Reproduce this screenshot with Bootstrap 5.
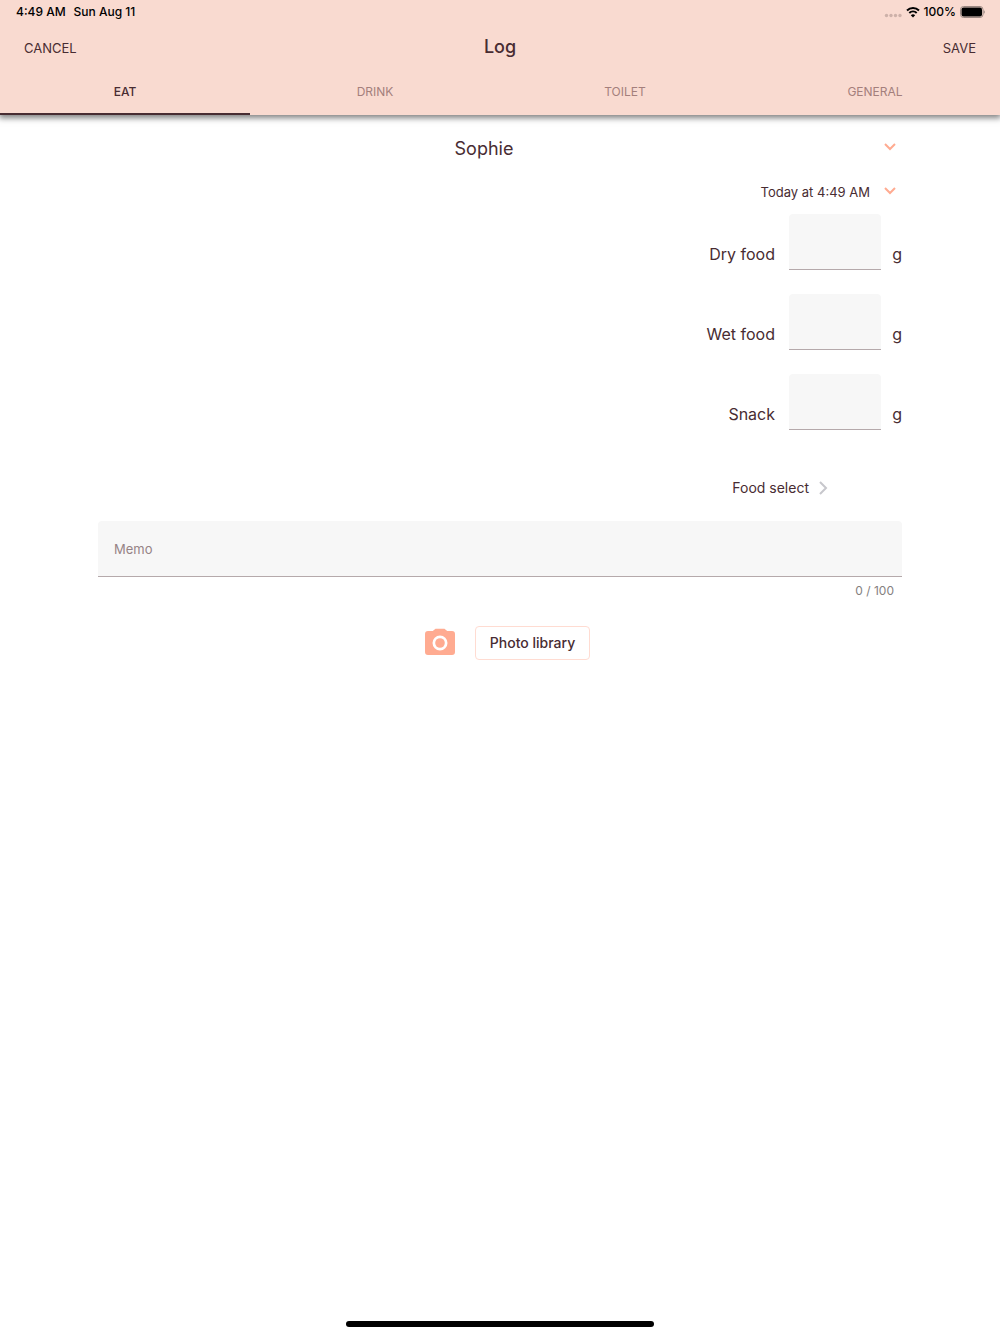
<!DOCTYPE html>
<html lang="en">
<head>
<meta charset="utf-8">
<meta name="viewport" content="width=device-width, initial-scale=1">
<title>Log</title>
<link href="https://cdn.jsdelivr.net/npm/bootstrap@5.3.0/dist/css/bootstrap.min.css" rel="stylesheet">
<style>
  :root { --ink: #482c32; --blush: #f9dad0; --peach: #ffab91; --field: #f7f7f7; }
  body { font-family: Inter, "Liberation Sans", sans-serif; color: var(--ink); background: #fff; }
  button, .btn { color: var(--ink); }
  .app-header { background: var(--blush); box-shadow: 0 2px 6px 1px rgba(0,0,0,.5); }
  .status-bar { height: 24px; font-size: 12px; line-height: 24px; font-weight: 500; color: #000; padding: 0 15px 0 16px; }
  .title-bar { height: 47px; }
  .title-bar h1 { font-size: 18px; line-height: 24px; font-weight: 500; padding-top: 11px; }
  .bar-action { font-size: 13px; line-height: 20px; padding: 14px 24px; border: 0; border-radius: 0; }
  .app-tabs .nav-link { height: 44px; padding: 0; font-size: 12px; line-height: 42px; color: #a47f7c; background: none; border: 0; border-bottom: 2px solid transparent; border-radius: 0; width: 100%; }
  .app-tabs .nav-link.active { color: var(--ink); font-weight: 500; border-bottom-color: var(--ink); }
  .log-form { padding: 20px 98px; }
  .row-action { border: 0; background: none; padding: 0; }
  .row-action svg { width: 24px; height: 24px; }
  .pet-row { height: 28px; font-size: 18px; line-height: 28px; }
  .time-row { height: 27px; font-size: 13px; line-height: 27px; }
  .entry { height: 56px; font-size: 16px; line-height: 24px; padding-bottom: 4px; }
  .entry-label { margin-right: 14px; }
  .entry-unit { width: 21px; }
  .filled { background: var(--field); border: 0; border-bottom: 1px solid #b5a9ab; border-radius: 4px 4px 0 0; height: 56px; font-size: 13px; color: var(--ink); }
  .filled::placeholder { color: #968386; opacity: 1; }
  .filled:focus { background: var(--field); }
  .entry .filled { width: 92px; margin-bottom: -4px; }
  .food-row { margin: 44px 65px 0 0; font-size: 14px; line-height: 28px; }
  .memo { margin-top: 19px; padding: 0 16px; }
  .counter { font-size: 12px; line-height: 28px; color: #858080; padding-right: 8px; }
  .photo-row { margin-top: 20px; }
  .camera-btn { width: 61px; border: 0; background: none; padding: 0; }
  .library-btn, .library-btn:hover { border: 1px solid #ffdcd2; border-radius: 4px; background: #fff; font-size: 14px; font-weight: 500; line-height: 20px; padding: 6px 14px; }
  .home-bar { width: 308px; height: 6px; border-radius: 3px; background: #000; margin-bottom: 7px; }
</style>
<script src="https://cdn.jsdelivr.net/npm/bootstrap@5.3.0/dist/js/bootstrap.bundle.min.js"></script>
</head>
<body class="d-flex flex-column min-vh-100">
<header class="app-header">
  <div class="status-bar d-flex justify-content-between">
    <div class="d-flex gap-2"><span>4:49 AM</span><span>Sun Aug 11</span></div>
    <div class="d-flex align-items-center">
      <svg class="me-1" width="18" height="14" viewBox="0 0 18 14" fill="#cdb1a9" aria-hidden="true"><circle cx="2.500" cy="10.500" r="1.700"/><circle cx="7" cy="10.500" r="1.700"/><circle cx="11.500" cy="10.500" r="1.700"/><circle cx="16" cy="10.500" r="1.700"/></svg>
      <svg class="me-1" width="14" height="12" viewBox="0 0 14 12" fill="none" stroke="#000" stroke-width="2" aria-label="Wi-Fi"><path d="M1 4.500a8.600 8.600 0 0 1 12 0M3.300 7a5.300 5.300 0 0 1 7.400 0"/><path d="M7 11.500 4.800 9.200a3.200 3.200 0 0 1 4.400 0z" fill="#000" stroke="none"/></svg>
      <span class="me-1">100%</span>
      <svg width="25" height="12" viewBox="0 0 25 12" aria-label="Battery full"><rect x=".5" y=".5" width="22.500" height="11" rx="3" fill="none" stroke="#9b8882"/><rect x="1.500" y="1.500" width="20.500" height="9" rx="2"/><path d="M23.700 4.200c1.500.6 1.500 3 0 3.600z" fill="#9b8882"/></svg>
    </div>
  </div>
  <div class="title-bar row g-0">
    <div class="col text-start"><button type="button" class="btn bar-action">CANCEL</button></div>
    <h1 class="col text-center mb-0">Log</h1>
    <div class="col text-end"><button type="button" class="btn bar-action">SAVE</button></div>
  </div>
  <ul class="nav nav-justified app-tabs" role="tablist">
    <li class="nav-item" role="presentation"><button type="button" class="nav-link active" role="tab" aria-selected="true">EAT</button></li>
    <li class="nav-item" role="presentation"><button type="button" class="nav-link" role="tab" aria-selected="false">DRINK</button></li>
    <li class="nav-item" role="presentation"><button type="button" class="nav-link" role="tab" aria-selected="false">TOILET</button></li>
    <li class="nav-item" role="presentation"><button type="button" class="nav-link" role="tab" aria-selected="false">GENERAL</button></li>
  </ul>
</header>

<main class="flex-grow-1">
  <form class="log-form">
    <button type="button" class="row-action pet-row d-flex w-100 gap-2">
      <span class="flex-grow-1 text-center">Sophie</span>
      <svg viewBox="0 0 24 24" fill="none" stroke="#ffab91" stroke-width="2" aria-hidden="true"><path d="m7 9 5 5 5-5"/></svg>
    </button>
    <button type="button" class="row-action time-row d-flex w-100 gap-2 mt-3">
      <span class="flex-grow-1 text-end">Today at 4:49 AM</span>
      <svg viewBox="0 0 24 24" fill="none" stroke="#ffab91" stroke-width="2" aria-hidden="true"><path d="m7 9 5 5 5-5"/></svg>
    </button>
    <div class="d-flex flex-column gap-4 mt-2">
      <div class="entry d-flex justify-content-end align-items-end">
        <label class="entry-label" for="dry">Dry food</label><input id="dry" class="form-control filled" type="text" inputmode="decimal"><span class="entry-unit text-end">g</span>
      </div>
      <div class="entry d-flex justify-content-end align-items-end">
        <label class="entry-label" for="wet">Wet food</label><input id="wet" class="form-control filled" type="text" inputmode="decimal"><span class="entry-unit text-end">g</span>
      </div>
      <div class="entry d-flex justify-content-end align-items-end">
        <label class="entry-label" for="snack">Snack</label><input id="snack" class="form-control filled" type="text" inputmode="decimal"><span class="entry-unit text-end">g</span>
      </div>
    </div>
    <div class="food-row d-flex justify-content-end">
      <button type="button" class="row-action d-flex align-items-center gap-1">Food select
        <svg viewBox="0 0 24 24" fill="none" stroke="#c7c7cc" stroke-width="2" aria-hidden="true"><path d="m7 6 6 6-6 6"/></svg>
      </button>
    </div>
    <input class="form-control filled memo" type="text" maxlength="100" placeholder="Memo" aria-label="Memo">
    <div class="counter text-end">0 / 100</div>
    <div class="photo-row d-flex justify-content-center align-items-center">
      <button type="button" class="camera-btn me-1" aria-label="Take a photo">
        <svg width="36" height="36" viewBox="0 0 24 24" fill="#ffab91" aria-hidden="true"><circle cx="12" cy="12" r="3.200"/><path fill-rule="evenodd" d="M9 2.500 7.200 4H4a2 2 0 0 0-2 2v12a2 2 0 0 0 2 2h16a2 2 0 0 0 2-2V6a2 2 0 0 0-2-2h-3.200L15 2.500zM12 17a5 5 0 1 1 0-10 5 5 0 0 1 0 10z"/></svg>
      </button>
      <button type="button" class="btn library-btn">Photo library</button>
    </div>
  </form>
</main>
<div class="home-bar mx-auto"></div>
</body>
</html>
